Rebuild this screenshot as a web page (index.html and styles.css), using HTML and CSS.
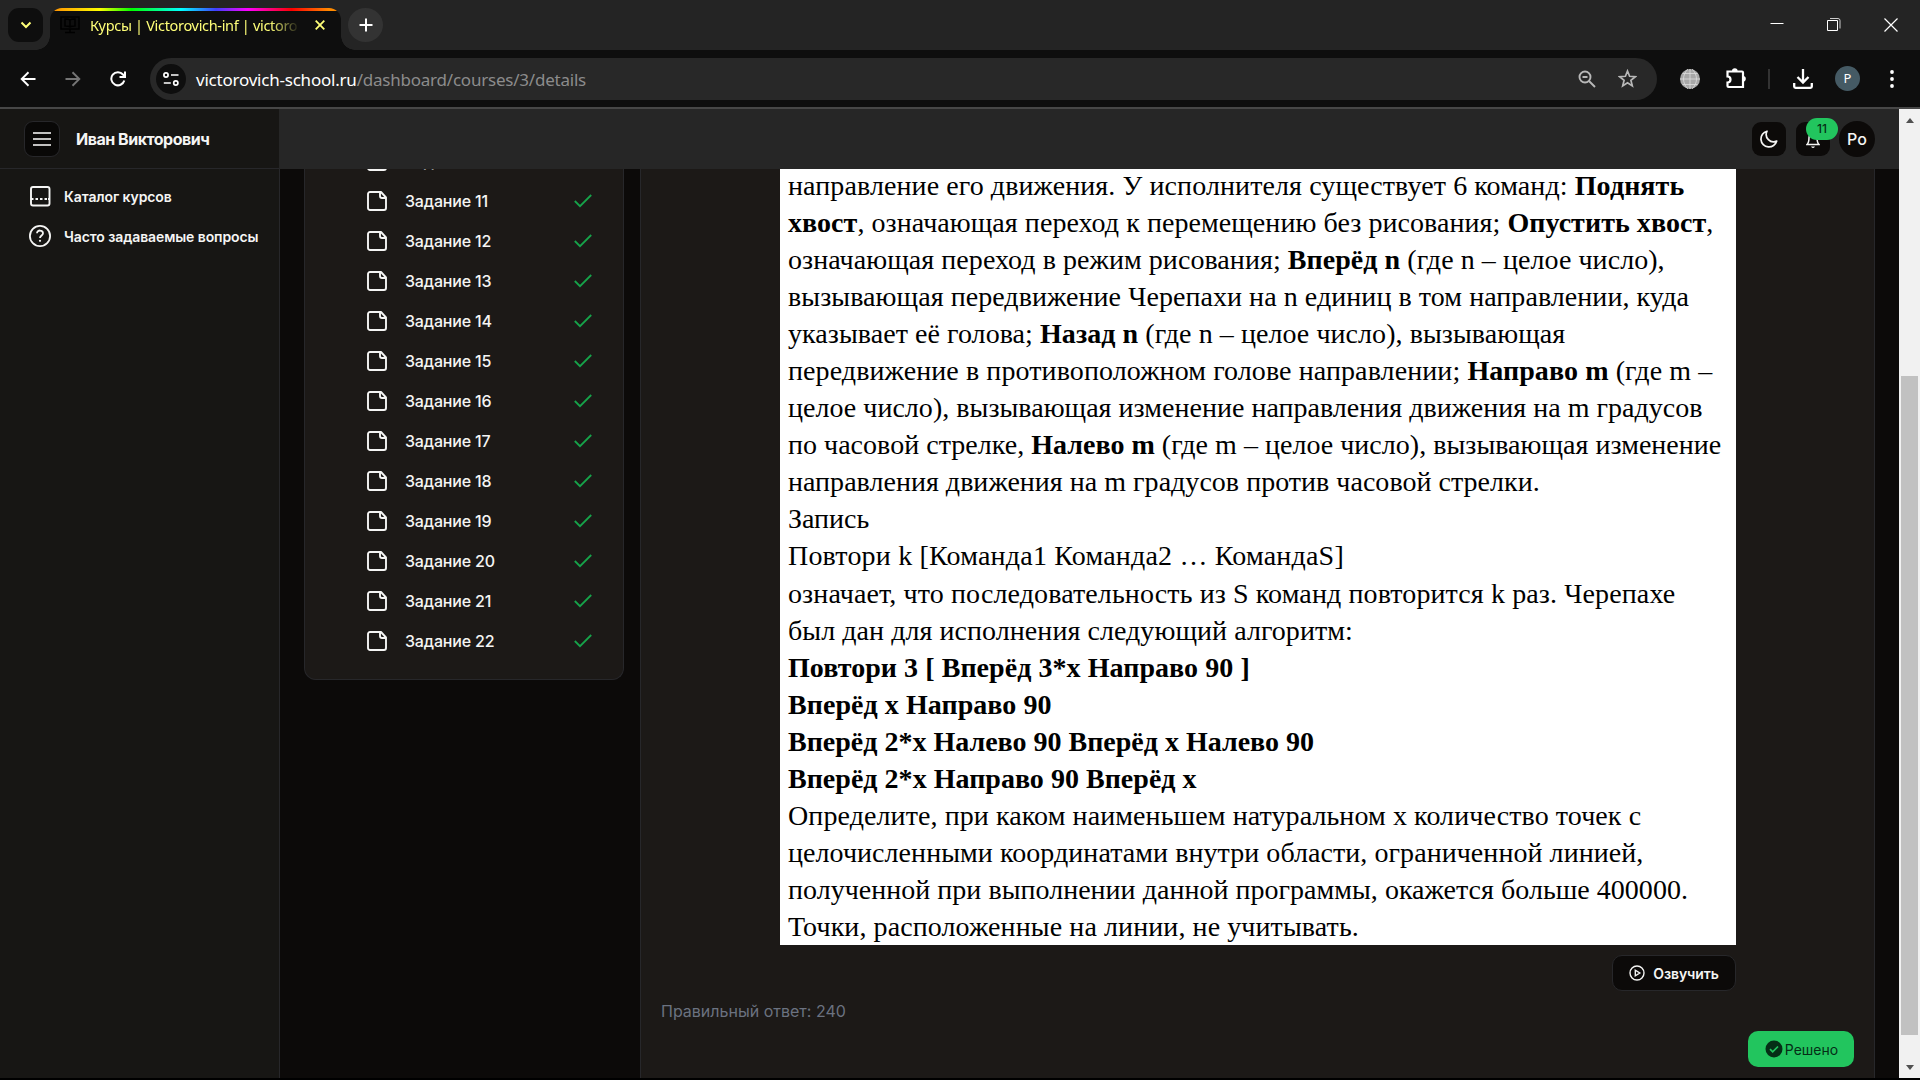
FILE: index.html
```html
<!DOCTYPE html>
<html lang="ru">
<head>
<meta charset="utf-8">
<title>Курсы | Victorovich-inf</title>
<link rel="stylesheet" href="styles.css">
</head>
<body>
<svg class="defs" aria-hidden="true">
  <symbol id="file" viewBox="0 0 20 20"><path d="M3 1H14L19 6.500V17a2 2 0 0 1-2 2H3a2 2 0 0 1-2-2V3a2 2 0 0 1 2-2ZM13 1.500V5a2 2 0 0 0 2 2h3.500" fill="none" stroke="currentColor" stroke-width="1.900" stroke-linejoin="round"/></symbol>
  <symbol id="check" viewBox="0 0 18 14"><path d="M.8 7 6 12.200 17.200 1" fill="none" stroke="currentColor" stroke-width="1.800"/></symbol>
</svg>
<div class="tabstrip">
  <div class="tab-search"><svg width="12" height="8" viewBox="0 0 12 8"><path d="M1.500 1.500 6 6l4.500-4.500" fill="none" stroke="#ffff78" stroke-width="2"/></svg></div>
  <div class="tab">
    <svg class="favicon" width="20" height="18" viewBox="0 0 20 18"><path d="M1 1h18v12H1zM10 13v3M5 16.500h10M5 3v7c2 0 4 0 5 1 1-1 3-1 5-1V3c-2 0-4 0-5 1-1-1-3-1-5-1ZM10 4v7" fill="none" stroke="#000" stroke-width="1.500"/></svg>
    <span class="tab-title">Курсы | Victorovich-inf | victoro</span>
    <svg class="tab-close" width="10" height="10" viewBox="0 0 10 10"><path d="M.7.7l8.600 8.600M9.300.7.7 9.300" stroke="#ffff78" stroke-width="1.800"/></svg>
  </div>
  <div class="new-tab"><svg width="14" height="14" viewBox="0 0 14 14"><path d="M7 .5v13M.5 7h13" stroke="#fff" stroke-width="2"/></svg></div>
  <div class="window-controls">
    <svg width="14" height="14" viewBox="0 0 14 14"><path d="M.5 5.500h13" stroke="#fff"/></svg>
    <svg width="14" height="14" viewBox="0 0 14 14"><path d="M.5 2.500h10v10H.5z" fill="none" stroke="#fff"/><path d="M3 .5h8a2 2 0 0 1 2 2v8" fill="none" stroke="#ccc" stroke-width="1"/></svg>
    <svg width="14" height="14" viewBox="0 0 14 14"><path d="M.5.5l13 13M13.500.5l-13 13" stroke="#fff" stroke-width="1.200"/></svg>
  </div>
</div>
<div class="toolbar">
  <svg class="nav-back" width="16" height="16" viewBox="0 0 16 16"><path d="M15.500 8H2M8.500 1.300 1.700 8l6.800 6.700" fill="none" stroke="#fff" stroke-width="1.900"/></svg>
  <svg class="nav-forward" width="16" height="16" viewBox="0 0 16 16"><path d="M.5 8H14M7.500 1.300 14.300 8l-6.800 6.700" fill="none" stroke="#757575" stroke-width="1.900"/></svg>
  <svg class="nav-reload" width="16" height="16" viewBox="0 0 16 16"><path d="M14.300 9.500A6.600 6.600 0 1 1 13 3.500l1.800 2M15 .5V6H9.500" fill="none" stroke="#fff" stroke-width="2"/></svg>
  <div class="address">
    <div class="site-info"><svg width="16" height="14" viewBox="0 0 16 14"><g fill="none" stroke="#fff" stroke-width="1.700"><circle cx="3" cy="3" r="2.100"/><path d="M8 3h7.500M.8 11h7"/><circle cx="12.800" cy="11" r="2.100"/></g></svg></div>
    <span class="url">victorovich-school.ru<span class="path">/dashboard/courses/3/details</span></span>
    <svg class="zoom" width="18" height="18" viewBox="0 0 18 18"><g fill="none" stroke="#b8b8b8" stroke-width="1.900"><circle cx="7" cy="7" r="5.500"/><path d="m11 11 6 6M4.500 7h5"/></g></svg>
    <svg class="star" width="19" height="19" viewBox="0 0 19 19"><path d="m9.500 2 2.100 5.300 5.700.4-4.400 3.600 1.400 5.600-4.800-3.100-4.800 3.100 1.400-5.600L1.700 7.700l5.700-.4Z" fill="none" stroke="#b8b8b8" stroke-width="1.700"/></svg>
  </div>
  <svg class="globe" width="20" height="20" viewBox="0 0 20 20"><circle cx="10" cy="10" r="10" fill="#a8a8a8"/><path d="M10 0v20M0 10h20M2.500 4.500h15M2.500 15.500h15M8 0C2 6 2 14 8 20M12 0c6 6 6 14 0 20" fill="none" stroke="#ddd" stroke-width=".8"/></svg>
  <svg class="puzzle" width="22" height="22" viewBox="0 0 22 22"><path d="M2.500 4.500H17a1 1 0 0 1 1 1V20H3.500a1 1 0 0 1-1-1v-3.500c4 0 4-6 0-6Z" fill="none" stroke="#fff" stroke-width="2.200"/><path d="M7 4a2.800 2.800 0 0 1 5.600 0M18 9a2.800 2.800 0 0 1 0 5.600" fill="#fff"/></svg>
  <i class="divider"></i>
  <svg class="download" width="20" height="20" viewBox="0 0 20 20"><path d="M10 0v13M4.500 8l5.500 5.500L15.500 8M1.200 14v3.500q0 1.300 1.300 1.300h15q1.300 0 1.300-1.300V14" fill="none" stroke="#fff" stroke-width="2.300"/></svg>
  <span class="profile">P</span>
  <svg class="kebab" width="4" height="18" viewBox="0 0 4 18"><g fill="#fff"><circle cx="2" cy="2" r="1.900"/><circle cx="2" cy="9" r="1.900"/><circle cx="2" cy="16" r="1.900"/></g></svg>
</div>
<div class="viewport">
  <aside class="sidebar">
    <div class="brand">
      <span class="menu"><svg width="18" height="14" viewBox="0 0 18 14"><path d="M0 1h18M0 7h18M0 13h18" stroke="#fff" stroke-width="1.700"/></svg></span>
      <b>Иван Викторович</b>
    </div>
    <nav>
      <a><svg width="22" height="22" viewBox="0 0 22 22"><g fill="none" stroke="#f5f5f4" stroke-width="1.900"><rect x="2" y="2" width="18.500" height="18.500" rx="2"/><path d="M2 14h2.500M6.500 14H9M11 14h2.500M15.500 14H18M19 14h1.500"/></g></svg>Каталог курсов</a>
      <a><svg width="22" height="22" viewBox="0 0 22 22"><g fill="none" stroke="#f5f5f4" stroke-width="1.800"><circle cx="11" cy="11" r="10.100"/><path d="M8 8.300C8 4.500 14 4.700 14 8.300c0 2.200-3 2.200-3 4.700"/></g><circle cx="11" cy="15.800" r="1.100" fill="#f5f5f4"/></svg>Часто задаваемые вопросы</a>
    </nav>
  </aside>
  <div class="page">
    <header>
      <span class="icon-button"><svg width="18" height="18" viewBox="0 0 18 18"><path d="M7 1.200A8 8 0 1 0 16.700 11 7.300 7.300 0 0 1 7 1.200Z" fill="none" stroke="#f5f5f4" stroke-width="1.700" stroke-linejoin="round"/></svg></span>
      <span class="icon-button bell"><svg width="14" height="18" viewBox="0 0 14 18"><path d="M1 13.500h12c-2-2-2-3.500-2-7a4 4 0 0 0-8 0c0 3.500 0 5-2 7Z" fill="none" stroke="#f5f5f4" stroke-width="1.500"/><path d="M5 15.500h4q-2 3-4 0" fill="#f5f5f4"/></svg><span class="badge">11</span></span>
      <span class="avatar">Po</span>
    </header>
    <div class="content">
      <section class="tasks">
        <div class="task"><svg class="file"><use href="#file"/></svg><span>Задание 10</span><svg class="check"><use href="#check"/></svg></div>
        <div class="task"><svg class="file"><use href="#file"/></svg><span>Задание 11</span><svg class="check"><use href="#check"/></svg></div>
        <div class="task"><svg class="file"><use href="#file"/></svg><span>Задание 12</span><svg class="check"><use href="#check"/></svg></div>
        <div class="task"><svg class="file"><use href="#file"/></svg><span>Задание 13</span><svg class="check"><use href="#check"/></svg></div>
        <div class="task"><svg class="file"><use href="#file"/></svg><span>Задание 14</span><svg class="check"><use href="#check"/></svg></div>
        <div class="task"><svg class="file"><use href="#file"/></svg><span>Задание 15</span><svg class="check"><use href="#check"/></svg></div>
        <div class="task"><svg class="file"><use href="#file"/></svg><span>Задание 16</span><svg class="check"><use href="#check"/></svg></div>
        <div class="task"><svg class="file"><use href="#file"/></svg><span>Задание 17</span><svg class="check"><use href="#check"/></svg></div>
        <div class="task"><svg class="file"><use href="#file"/></svg><span>Задание 18</span><svg class="check"><use href="#check"/></svg></div>
        <div class="task"><svg class="file"><use href="#file"/></svg><span>Задание 19</span><svg class="check"><use href="#check"/></svg></div>
        <div class="task"><svg class="file"><use href="#file"/></svg><span>Задание 20</span><svg class="check"><use href="#check"/></svg></div>
        <div class="task"><svg class="file"><use href="#file"/></svg><span>Задание 21</span><svg class="check"><use href="#check"/></svg></div>
        <div class="task"><svg class="file"><use href="#file"/></svg><span>Задание 22</span><svg class="check"><use href="#check"/></svg></div>
      </section>
      <main>
        <div class="statement">
          <p>направление его движения. У исполнителя существует 6 команд: <b>Поднять</b></p>
          <p><b>хвост</b>, означающая переход к перемещению без рисования; <b>Опустить хвост</b>,</p>
          <p>означающая переход в режим рисования; <b>Вперёд n</b> (где n – целое число),</p>
          <p>вызывающая передвижение Черепахи на n единиц в том направлении, куда</p>
          <p>указывает её голова; <b>Назад n</b> (где n – целое число), вызывающая</p>
          <p>передвижение в противоположном голове направлении; <b>Направо m</b> (где m –</p>
          <p>целое число), вызывающая изменение направления движения на m градусов</p>
          <p>по часовой стрелке, <b>Налево m</b> (где m – целое число), вызывающая изменение</p>
          <p>направления движения на m градусов против часовой стрелки.</p>
          <p>Запись</p>
          <p>Повтори k [Команда1 Команда2 … КомандаS]</p>
          <p>означает, что последовательность из S команд повторится k раз. Черепахе</p>
          <p>был дан для исполнения следующий алгоритм:</p>
          <p><b>Повтори 3 [ Вперёд 3*x Направо 90 ]</b></p>
          <p><b>Вперёд x Направо 90</b></p>
          <p><b>Вперёд 2*x Налево 90 Вперёд x Налево 90</b></p>
          <p><b>Вперёд 2*x Направо 90 Вперёд x</b></p>
          <p>Определите, при каком наименьшем натуральном x количество точек с</p>
          <p>целочисленными координатами внутри области, ограниченной линией,</p>
          <p>полученной при выполнении данной программы, окажется больше 400000.</p>
          <p>Точки, расположенные на линии, не учитывать.</p>
        </div>
        <div class="speak"><svg width="16" height="16" viewBox="0 0 16 16"><g fill="none" stroke="#f5f5f4" stroke-width="1.400"><circle cx="8" cy="8" r="7"/><path d="M6.300 5.200v5.600L10.800 8Z"/></g></svg>Озвучить</div>
        <div class="answer">Правильный ответ: 240</div>
        <div class="solved"><svg width="18" height="18" viewBox="0 0 18 18"><circle cx="9" cy="9" r="8.500" fill="#052e16"/><path d="m5 9.200 2.700 2.700L13 6.500" fill="none" stroke="#22c55e" stroke-width="1.700"/></svg>Решено</div>
      </main>
    </div>
  </div>
  <div class="scrollbar"><i class="up"></i><div class="thumb"></div><i class="down"></i></div>
</div>
</body>
</html>
```
FILE: styles.css
```css
* { box-sizing: border-box; }
body { margin: 0; width: 1920px; height: 1080px; overflow: hidden; background: #000; display: flex; flex-direction: column; font-family: Inter, sans-serif; color: #f5f5f4; }
svg { display: block; flex: none; }
.defs { position: absolute; width: 0; height: 0; }
.tabstrip { height: 50px; flex: none; background: #242424; display: flex; align-items: flex-start; padding-left: 8px; font-family: "Noto Sans", sans-serif; }
.tab-search { width: 35px; height: 34px; margin-top: 8px; border-radius: 11px; background: #0e0e0e; display: grid; place-items: center; }
.tab { position: relative; width: 291px; height: 42px; margin: 8px 0 0 7px; border-radius: 12px 12px 0 0; background: linear-gradient(90deg, #ff8a00, #ff0 17%, #0f0 28%, #0ff 45%, #4040ff 57%, #f0f 68%, #f00 83%, #ff8a00 96%) top / 100% 3px no-repeat #0e0e0e; display: flex; align-items: center; padding: 0 16px 8px 10px; }
.tab::before, .tab::after { content: ""; position: absolute; bottom: 0; width: 14px; height: 14px; }
.tab::before { left: -14px; background: radial-gradient(circle at 0 0, transparent 13.500px, #0e0e0e 14px); }
.tab::after { right: -14px; background: radial-gradient(circle at 100% 0, transparent 13.500px, #0e0e0e 14px); }
.tab-title { margin-left: 10px; width: 212px; white-space: nowrap; font-size: 14.500px; letter-spacing: -.32px; line-height: 24px; color: #ffff78; -webkit-mask-image: linear-gradient(90deg, #000 180px, transparent 210px); }
.tab-close { margin-left: auto; }
.new-tab { width: 35px; height: 34px; margin: 8px 0 0 7px; border-radius: 50%; background: #333; display: grid; place-items: center; }
.window-controls { margin: 18px 22px 0 auto; display: flex; gap: 43px; }
.toolbar { height: 59px; flex: none; background: #0e0e0e; border-bottom: 2px solid #474747; display: flex; align-items: center; padding: 0 26px 0 20px; }
.nav-back, .nav-forward, .nav-reload { margin-left: 29px; }
.nav-back { margin-left: 0; }
.address { width: 1507px; height: 42px; margin-left: 24px; border-radius: 21px; background: #282828; display: flex; align-items: center; padding: 0 20px 0 6px; }
.site-info { width: 30px; height: 30px; border-radius: 50%; background: #0e0e0e; display: grid; place-items: center; }
.url { flex: 1; margin-left: 10px; padding-top: 1px; font: 17px "Noto Sans", sans-serif; letter-spacing: -.22px; color: #fff; }
.path { color: #8c8c8c; }
.star { margin-left: 22px; }
.globe { margin-left: 23px; }
.puzzle { margin-left: 25px; margin-top: -2px; }
.divider { width: 2px; height: 20px; background: #333; margin-left: 21px; }
.download { margin-left: 23px; }
.profile { width: 25px; height: 25px; margin-left: 22px; border-radius: 50%; background: #455a64; text-align: center; font: 13px/25px "Noto Sans", sans-serif; color: #fff; }
.kebab { margin-left: auto; }
.viewport { height: 969px; display: flex; background: #0c0a09; overflow: hidden; }
.sidebar { width: 280px; flex: none; background: #171614; border-right: 1px solid #27272a; }
.brand { height: 60px; border-bottom: 1px solid #27272a; display: flex; align-items: center; padding-left: 24px; gap: 16px; font-size: 16px; letter-spacing: -.48px; }
.menu { width: 36px; height: 36px; border: 1px solid #27272a; border-radius: 9px; background: #090807; display: grid; place-items: center; }
nav { padding-top: 7px; }
nav a { height: 40px; display: flex; align-items: center; padding-left: 29px; gap: 13px; font-size: 14px; font-weight: 600; letter-spacing: -.1px; white-space: nowrap; }
.page { flex: 1; display: flex; flex-direction: column; min-width: 0; }
header { height: 60px; flex: none; margin-left: -1px; background: #262626; display: flex; align-items: center; justify-content: flex-end; padding-right: 24px; }
.icon-button { position: relative; width: 34px; height: 34px; margin-right: 10px; border-radius: 9px; background: #0c0a09; display: grid; place-items: center; }
.bell svg { margin-top: 1px; }
.badge { position: absolute; left: 10px; top: -4px; width: 32px; height: 22px; border-radius: 11px; background: #22c55e; color: #052e16; text-align: center; font-size: 12px; line-height: 22px; font-weight: 500; }
.avatar { width: 36px; height: 36px; margin-left: -1px; border-radius: 50%; background: #0c0a09; text-align: center; font-size: 16px; line-height: 37px; font-weight: 500; }
.content { flex: 1; display: flex; gap: 16px; padding: 0 24px; min-height: 0; overflow: hidden; align-items: flex-start; }
.tasks { width: 320px; height: 511px; flex: none; border: 1px solid #27272a; border-top: 0; border-radius: 0 0 12px 12px; background: #1c1917; padding: 0 31px 0 62px; overflow: hidden; }
.task { height: 40px; display: flex; align-items: center; font-size: 16px; font-weight: 500; }
.task:first-child { margin-top: -28px; }
.task span { margin-left: 18px; letter-spacing: -.16px; }
.file { width: 20px; height: 20px; }
.check { width: 18px; height: 14px; margin-left: auto; color: #16a34a; }
main { flex: 1; align-self: stretch; background: #1c1917; border: 1px solid #27272a; border-width: 0 1px; display: flex; flex-direction: column; padding-right: 20px; }
.statement { width: 956px; height: 776px; margin-left: 139px; background: #fff; color: #000; padding: 0 8px; font: 28px/37.050px "Liberation Serif", serif; overflow: hidden; }
.statement p { margin: 0; white-space: nowrap; letter-spacing: .06px; }
.statement p:first-child { margin-top: -2px; }
.statement p:nth-child(1), .statement p:nth-child(6), .statement p:nth-child(18), .statement p:nth-child(21) { letter-spacing: .095px; }
.statement p:nth-child(7), .statement p:nth-child(8), .statement p:nth-child(9), .statement p:nth-child(17), .statement p:nth-child(20) { letter-spacing: .025px; }
.statement p:nth-child(11) { letter-spacing: .2px; }
.statement p:nth-child(12) { letter-spacing: .115px; }
.statement p:nth-child(10), .statement p:nth-child(16) { letter-spacing: 0; }
.speak { width: 124px; height: 36px; margin: 10px 0 0 971px; border: 1px solid #27272a; border-radius: 10px; background: #0c0a09; display: flex; align-items: center; justify-content: center; gap: 8px; font-size: 14px; font-weight: 600; letter-spacing: -.1px; }
.answer { margin: 8px 0 0 20px; font-size: 16px; line-height: 24px; color: #6b7280; }
.solved { width: 106px; height: 36px; margin: 8px 0 0 auto; border-radius: 10px; background: #22c55e; color: #052e16; display: flex; align-items: center; justify-content: center; gap: 2px; padding-left: 1px; font-size: 14px; }
.scrollbar { width: 21px; flex: none; background: #f1f1f1; display: flex; flex-direction: column; align-items: center; }
.thumb { width: 17px; height: 659px; margin-top: 253px; background: #c1c1c1; }
.up, .down { border: 4.500px solid transparent; }
.up { margin-top: 5px; border-bottom: 5px solid #505050; }
.down { margin-top: auto; margin-bottom: 4px; border-top: 5px solid #505050; }
```
